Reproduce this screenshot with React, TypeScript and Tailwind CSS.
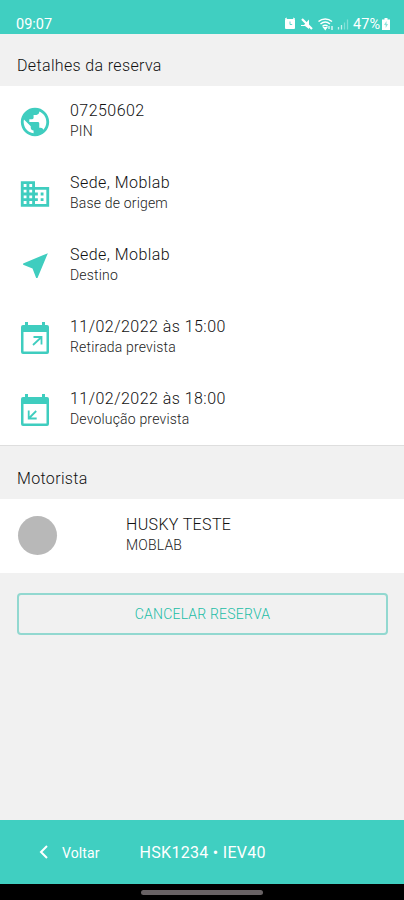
import type { ReactNode } from "react";
import { MdBusiness, MdNearMe, MdPublic } from "react-icons/md";

interface DetailRowProps {
  icon: ReactNode;
  title: string;
  label: string;
}

function CalendarIcon({ direction }: { direction: "out" | "in" }) {
  return (
    <svg width="30" height="34" viewBox="0 0 30 34" fill="none">
      <path
        fillRule="evenodd"
        fill="#3fcdbf"
        d="M5 1h3v3h14V1h3v3h2a2 2 0 0 1 2 2v25a2 2 0 0 1-2 2H3a2 2 0 0 1-2-2V6a2 2 0 0 1 2-2h2V1zM3.500 11v19.500h23V11h-23z"
      />
      {direction === "out" ? (
        <path d="M13.500 16h8v7.500M21 16.500l-8 7.500" stroke="#3fcdbf" strokeWidth="1.800" />
      ) : (
        <path d="M8.700 17.500v8h8M9.200 25l7-7" stroke="#3fcdbf" strokeWidth="1.800" />
      )}
    </svg>
  );
}

function DetailRow({ icon, title, label }: DetailRowProps) {
  return (
    <div className="h-[72px] flex items-center pl-[18px]">
      <div className="w-[34px] flex justify-center text-[#3fcdbf]">{icon}</div>
      <div className="pl-[18px] -mt-[3px]">
        <p className="text-[16px] leading-[20px] tracking-[0.46px] font-light text-[#111]">{title}</p>
        <p className="text-[14px] leading-[20px] tracking-[0.18px] font-light text-[#222]">{label}</p>
      </div>
    </div>
  );
}

function StatusBar() {
  return (
    <div className="h-[34px] bg-[#40cfc1] flex items-end pl-4 pr-[14px] pb-[1px] text-white">
      <span className="text-[14.500px] leading-[17px]">09:07</span>
      <svg className="ml-auto mb-[2px]" width="66" height="14" viewBox="0 0 66 14" fill="none">
        {/* Alarm */}
        <rect x="1" y="2" width="10" height="10" rx="1" fill="#fff" />
        <path d="M1 2l2-1M11 2L9 1" stroke="#fff" />
        <path d="M6 4.500v3h2.200" stroke="#40cfc1" strokeOpacity="0.800" />
        {/* Muted */}
        <path d="M17 8h3l5-5.500v9.500l-4-3h-4z" fill="#fff" />
        <path d="M18 2l10 10" stroke="#fff" strokeWidth="2.200" />
        {/* Wifi */}
        <path
          d="M34.500 4.500c4-3.500 9.500-3.500 13.500 0M36.500 7c3-2.500 6.500-2.500 9.500 0M38.500 9.300c1.800-1.400 3.600-1.400 5.200 0"
          stroke="#fff"
          strokeWidth="1.500"
        />
        <path d="M41.200 12.500l-1.500-2h3zM45 9v3M48 9v4" fill="#fff" stroke="#fff" strokeWidth="1.200" />
        {/* Signal */}
        <path d="M54.500 10v2.500M57.500 8v4.500" stroke="#fff" strokeWidth="1.300" strokeOpacity="0.700" />
        <path d="M60.500 5.500v7M63.500 2.500v10" stroke="#fff" strokeWidth="1.300" strokeOpacity="0.350" />
      </svg>
      <span className="ml-[3px] text-[14.500px] leading-[17px]">47%</span>
      <svg className="ml-[2px] mb-[3px]" width="8" height="12" viewBox="0 0 8 12">
        <path d="M2.500 0h3v1.500H8V12H0V1.500h2.500z" fill="#fff" />
        <path d="M4.500 3L2 7h1.700v3L6 6H4.500z" fill="#40cfc1" fillOpacity="0.600" />
      </svg>
    </div>
  );
}

export default function App() {
  return (
    <div className="w-full h-screen flex flex-col overflow-hidden bg-[#f1f1f1] font-['Roboto',sans-serif]">
      <StatusBar />

      <h2 className="h-[52px] flex items-center pt-[11px] pl-[17px] text-[16px] tracking-[0.35px] font-light text-[#111]">
        Detalhes da reserva
      </h2>

      {/* Reservation */}
      <div className="h-[360px] bg-white border-b border-[#dedede]">
        <DetailRow icon={<MdPublic size={34} />} title="07250602" label="PIN" />
        <DetailRow icon={<MdBusiness size={34} />} title="Sede, Moblab" label="Base de origem" />
        <DetailRow icon={<MdNearMe size={33} className="mb-[2px]" />} title="Sede, Moblab" label="Destino" />
        <DetailRow
          icon={<CalendarIcon direction="out" />}
          title="11/02/2022 às 15:00"
          label="Retirada prevista"
        />
        <DetailRow
          icon={<CalendarIcon direction="in" />}
          title="11/02/2022 às 18:00"
          label="Devolução prevista"
        />
      </div>

      <h2 className="h-[53px] flex items-center pt-[12px] pl-[17px] text-[16px] tracking-[0.35px] font-light text-[#111]">
        Motorista
      </h2>

      {/* Driver */}
      <div className="h-[74px] bg-white flex items-center pl-[18px]">
        <div className="-mt-[1px] size-[39px] rounded-full bg-[#b8b8b8]" />
        <div className="ml-[69px] -mt-[3px]">
          <p className="text-[16px] leading-[20px] tracking-[0.35px] font-light text-[#111]">HUSKY TESTE</p>
          <p className="text-[14px] leading-[20px] tracking-[0.18px] font-light text-[#222]">MOBLAB</p>
        </div>
      </div>

      <button className="mt-5 ml-[17px] mr-4 h-[42px] rounded-[4px] border-2 border-[#92d8d0] text-[14px] tracking-[0.2px] font-light text-[#22bda6]">
        CANCELAR RESERVA
      </button>

      {/* Bottom bar */}
      <div className="mt-auto h-[64px] shrink-0 bg-[#40cfc1] flex items-center pl-[39px] pt-[2px] text-white">
        <svg className="mb-[2px]" width="9" height="14" viewBox="0 0 9 14" fill="none">
          <path d="M8 1L2 7l6 6" stroke="#fff" strokeWidth="2" />
        </svg>
        <span className="ml-[14px] text-[14px] tracking-[0.1px]">Voltar</span>
        <span className="ml-[40px] text-[16px] tracking-[0.3px]">HSK1234 • IEV40</span>
      </div>
      <div className="h-4 shrink-0 bg-black flex items-center justify-center">
        <div className="w-[122px] h-[5px] rounded-full bg-[#686264]" />
      </div>
    </div>
  );
}
